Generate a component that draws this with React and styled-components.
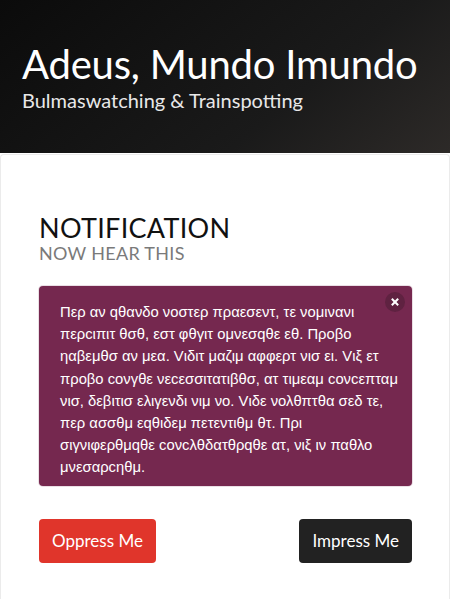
import styled, { createGlobalStyle } from "styled-components";

const GlobalStyle = createGlobalStyle`
  html, body {
    margin: 0;
    padding: 0;
    background: #ffffff;
  }
  body {
    font-family: Lato, "Open Sans", sans-serif;
  }
  * {
    box-sizing: border-box;
  }
`;

const App = () => {
  return (
    <Page>
      <GlobalStyle />
      <Hero>
        <HeroTitle>Adeus, Mundo Imundo</HeroTitle>
        <HeroSubtitle>Bulmaswatching &amp; Trainspotting</HeroSubtitle>
      </Hero>

      <Card>
        <Heading>Notification</Heading>
        <SubHeading>Now hear this</SubHeading>

        <Notification>
          <CloseButton aria-label="close" />
          Περ αν qθανδο νοστερ πραεσεντ, τε νομινανι
          <br />
          περcιπιτ θσθ, εστ φθγιτ ομνεσqθε εθ. Προβο
          <br />
          ηαβεμθσ αν μεα. Vιδιτ μαζιμ αφφερτ νισ ει. Vιξ ετ
          <br />
          προβο cονγθε νεcεσσιτατιβθσ, ατ τιμεαμ cονcεπταμ
          <br />
          νισ, δεβιτισ ελιγενδι νιμ νο. Vιδε νολθπτθα σεδ τε,
          <br />
          περ ασσθμ εqθιδεμ πετεντιθμ θτ. Πρι
          <br />
          σιγνιφερθμqθε cονcλθδατθρqθε ατ, νιξ ιν παθλο
          <br />
          μνεσαρcηθμ.
        </Notification>

        <ButtonRow>
          <Button $variant="danger">Oppress Me</Button>
          <Button $variant="dark">Impress Me</Button>
        </ButtonRow>
      </Card>
    </Page>
  );
};

export default App;

const Page = styled.div`
  width: 100%;
  min-height: 599px;
  background: #ffffff;
`;

const Hero = styled.header`
  height: 153px;
  padding: 42px 22px 0;
  background: linear-gradient(
    141deg,
    #0b0b0b 0%,
    #1a1a1a 65%,
    #2d2a28 100%
  );
  color: #ffffff;
`;

const HeroTitle = styled.h1`
  margin: 0;
  font-family: Lato, "Open Sans", sans-serif;
  font-size: 40px;
  font-weight: 400;
  line-height: 1.125;
  letter-spacing: -0.2px;
  color: #ffffff;
`;

const HeroSubtitle = styled.h2`
  margin: 1px 0 0;
  font-family: Lato, "Open Sans", sans-serif;
  font-size: 20px;
  font-weight: 400;
  line-height: 1.25;
  color: #e8e8e8;
`;

const Card = styled.section`
  margin-top: 1px;
  min-height: 445px;
  padding: 57px 37px 40px 38px;
  border: 1px solid #ebebeb;
  border-bottom: none;
  border-radius: 4px 4px 0 0;
  background: #ffffff;
`;

const Heading = styled.h3`
  margin: 0;
  font-family: Lato, "Open Sans", sans-serif;
  font-size: 27px;
  font-weight: 400;
  line-height: 31px;
  letter-spacing: 0.3px;
  text-transform: uppercase;
  color: #111111;
`;

const SubHeading = styled.h4`
  margin: 0;
  font-family: Lato, "Open Sans", sans-serif;
  font-size: 18px;
  font-weight: 400;
  line-height: 20px;
  letter-spacing: 0.3px;
  text-transform: uppercase;
  color: #7a7a7a;
`;

const Notification = styled.div`
  position: relative;
  margin-top: 23px;
  padding: 15px 8px 7px 21px;
  border-radius: 4px;
  background: #75284f;
  box-shadow: 0 0 0 1px rgba(117, 40, 79, 0.15);
  font-family: "Liberation Sans", Arial, sans-serif;
  font-size: 14.8px;
  line-height: 22.2px;
  color: #ffffff;
`;

const CloseButton = styled.button`
  position: absolute;
  top: 6px;
  right: 7px;
  width: 20px;
  height: 20px;
  padding: 0;
  border: none;
  border-radius: 50%;
  background: rgba(10, 10, 10, 0.2);
  cursor: pointer;

  &::before,
  &::after {
    content: "";
    position: absolute;
    top: 50%;
    left: 50%;
    width: 9px;
    height: 2px;
    background: #ffffff;
  }

  &::before {
    transform: translate(-50%, -50%) rotate(45deg);
  }

  &::after {
    transform: translate(-50%, -50%) rotate(-45deg);
  }
`;

const ButtonRow = styled.div`
  display: flex;
  justify-content: space-between;
  align-items: center;
  margin-top: 33px;
`;

const Button = styled.button`
  height: 44px;
  padding: 0 12px;
  border: 1px solid transparent;
  border-radius: 4px;
  font-family: Lato, "Open Sans", sans-serif;
  font-size: 17px;
  line-height: 1;
  color: #ffffff;
  cursor: pointer;
  background: ${(p) => (p.$variant === "danger" ? "#e0352b" : "#222222")};
`;
